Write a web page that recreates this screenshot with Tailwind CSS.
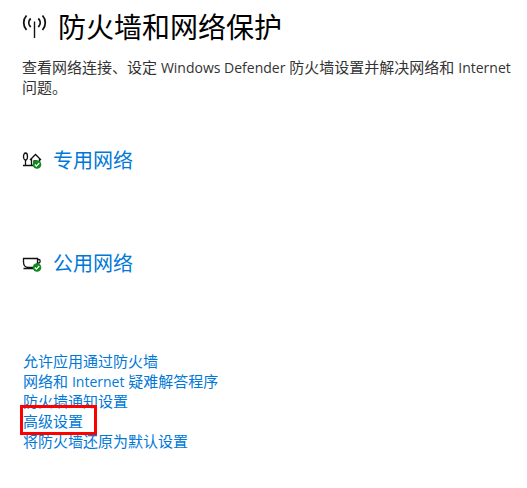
<!DOCTYPE html>
<html lang="zh-CN">
  <head>
    <meta charset="UTF-8" />
    <meta name="viewport" content="width=device-width, initial-scale=1.0" />
    <title>防火墙和网络保护</title>
    <script src="https://cdn.jsdelivr.net/npm/@tailwindcss/browser@4"></script>
  </head>
  <body
    class="min-h-screen bg-white font-['Open_Sans','Noto_Sans_CJK_SC',sans-serif] text-[15px] leading-5 text-[#333333]"
  >
    <main class="pt-[7px] pr-2 pb-9 pl-[22px]">
      <header>
        <div class="flex items-center gap-2.5">
          <svg
            class="h-7 w-[26px] shrink-0"
            viewBox="0 0 26 28"
            fill="none"
            stroke="#111111"
            aria-hidden="true"
          >
            <path stroke-width="1.8" d="M4.500 2.500C.8 6.500.8 13 4.500 17M8.700 5.500C6.200 8 6.200 11.500 8.700 14" />
            <path stroke-width="1.8" d="M20.500 2.500C24.200 6.500 24.200 13 20.500 17M16.300 5.500C18.800 8 18.800 11.500 16.300 14" />
            <path stroke-width="1.4" d="M12.500 8.500v16.500" />
          </svg>
          <h1 class="text-[28px] leading-10 text-black">防火墙和网络保护</h1>
        </div>
        <p class="mt-2.5">
          查看网络连接、设定 <span class="text-sm leading-none">Windows Defender</span>
          防火墙设置并解决网络和 <span class="text-sm leading-none">Internet</span>
          问题。
        </p>
      </header>

      <!-- Network profiles -->
      <section class="mt-[50px] flex flex-col gap-[75px]">
        <h2 class="flex items-center gap-[11px] text-xl leading-7">
          <svg class="h-5 w-5 shrink-0" viewBox="0 0 20 20" fill="none" aria-hidden="true">
            <g stroke="#111111" stroke-width="1.3">
              <ellipse cx="3.500" cy="5.500" rx="2" ry="3.500" />
              <path d="M3.500 9v5.500M1 14.500h10" />
              <path d="M8 9L13.500 3.500 19 9M9.500 7.500v7M17.500 7.500v4M12 14.500v-4.500h3" />
            </g>
            <circle cx="15" cy="13.500" r="4.300" fill="#0f8a1f" />
            <path d="M12.800 13.500l1.600 1.700 2.900-3.200" stroke="#fff" stroke-width="1.200" />
          </svg>
          <a href="#" class="text-[#0078d7]">专用网络</a>
        </h2>
        <h2 class="flex items-center gap-[11px] text-xl leading-7">
          <svg class="h-5 w-5 shrink-0" viewBox="0 0 20 20" fill="none" aria-hidden="true">
            <g stroke="#111111" stroke-width="1.3">
              <path d="M1.500 4.500h14v3.500c0 3.500-2 5.500-5 5.500H6.500c-3 0-5-2-5-5.500z" />
              <path d="M15.500 5.500h1.500c1.500 0 1.500 3.500 0 3.500h-1.500M1.500 14.500h9.500" />
            </g>
            <circle cx="15" cy="13.500" r="4.300" fill="#0f8a1f" />
            <path d="M12.800 13.500l1.600 1.700 2.900-3.200" stroke="#fff" stroke-width="1.200" />
          </svg>
          <a href="#" class="text-[#0078d7]">公用网络</a>
        </h2>
      </section>

      <ul class="mt-[73px] pl-px text-[#0078d7]">
        <li><a href="#">允许应用通过防火墙</a></li>
        <li><a href="#">网络和 <span class="text-sm leading-none">Internet</span> 疑难解答程序</a></li>
        <li><a href="#">防火墙通知设置</a></li>
        <li>
          <a href="#" class="relative inline-block align-top">
            高级设置
            <!-- Highlight frame around the advanced settings link -->
            <span class="absolute -top-1.5 -right-3.5 -bottom-1 -left-[3px] border-3 border-[#ff0000]"></span>
          </a>
        </li>
        <li><a href="#">将防火墙还原为默认设置</a></li>
      </ul>
    </main>
  </body>
</html>
